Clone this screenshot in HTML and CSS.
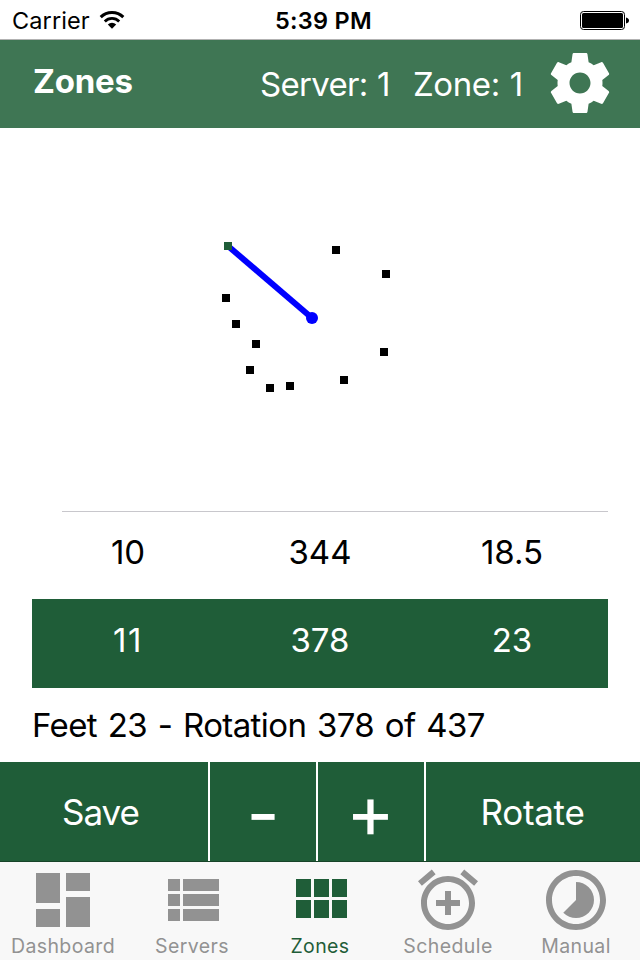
FILE: index.html
```html
<!DOCTYPE html>
<html lang="en">
    <head>
        <meta charset="utf-8">
        <title>Zones</title>
        <link rel="stylesheet" href="styles.css">
    </head>
    <body>
        <div class="status">
            <span class="carrier">Carrier</span>
            <svg class="wifi" width="26" height="20" viewBox="0 0 26 20">
                <path d="M1.7 7.1a16 16 0 0 1 22.6 0" fill="none" stroke="#000" stroke-width="3"/>
                <path d="M5.8 11.4a10.2 10.2 0 0 1 14.4 0" fill="none" stroke="#000" stroke-width="2.8"/>
                <path d="M8.8 14.4a6 6 0 0 1 8.4 0L13 18.7z"/>
            </svg>
            <span class="time">5:39 PM</span>
            <svg class="battery" width="50" height="20" viewBox="0 0 50 20">
                <rect x="0.5" y="1.5" width="44" height="18" rx="3" fill="none" stroke="#000"/>
                <rect x="2" y="3" width="41" height="15" rx="1.5"/>
                <path d="M46 7.5c2 .5 3 1.500 3 3s-1 2.500-3 3z"/>
            </svg>
        </div>
        <header class="header">
            <h1 class="title">Zones</h1>
            <span class="server">Server: 1</span>
            <span class="zone">Zone: 1</span>
            <svg class="icon" viewBox="0 0 24 24">
                <path d="M19.43 12.98c.04-.32.07-.64.07-.98s-.03-.66-.07-.98l2.110-1.650c.19-.15.24-.42.12-.64l-2-3.460c-.12-.22-.39-.3-.61-.22l-2.490 1c-.52-.4-1.080-.73-1.690-.98l-.38-2.650C14.460 2.180 14.250 2 14 2h-4c-.25 0-.46.18-.49.42l-.38 2.650c-.61.25-1.170.59-1.690.98l-2.490-1c-.23-.09-.49 0-.61.22l-2 3.460c-.13.22-.07.49.12.64l2.110 1.650c-.04.32-.07.65-.07.98s.03.66.07.98l-2.110 1.650c-.19.15-.24.42-.12.64l2 3.460c.12.22.39.3.61.22l2.490-1c.52.4 1.080.73 1.690.98l.38 2.650c.03.24.24.42.49.42h4c.25 0 .46-.18.49-.42l.38-2.650c.61-.25 1.170-.59 1.690-.98l2.490 1c.23.09.49 0 .61-.22l2-3.460c.12-.22.07-.49-.12-.64l-2.110-1.650zM12 15.500c-1.930 0-3.500-1.570-3.500-3.500s1.570-3.500 3.500-3.500 3.500 1.570 3.500 3.500-1.570 3.500-3.500 3.500z"/>
            </svg>
        </header>
        <main class="content">
            <svg class="plot" width="640" height="383" viewBox="0 128 640 383">
                <line x1="228" y1="246" x2="312" y2="318" stroke="#00f" stroke-width="6"/>
                <circle cx="312" cy="318" r="6" fill="#00f"/>
                <path d="M332 246h8v8h-8zM382 270h8v8h-8zM222 294h8v8h-8zM232 320h8v8h-8zM252 340h8v8h-8zM246 366h8v8h-8zM266 384h8v8h-8zM286 382h8v8h-8zM340 376h8v8h-8zM380 348h8v8h-8z"/>
                <rect class="current" x="224" y="242" width="8" height="8"/>
            </svg>
            <div class="points">
                <div class="row">
                    <span>10</span>
                    <span>344</span>
                    <span>18.5</span>
                </div>
                <div class="row selected">
                    <span class="number">11</span>
                    <span>378</span>
                    <span>23</span>
                </div>
            </div>
            <p class="info">Feet 23 - Rotation 378 of 437</p>
            <div class="buttons">
                <button type="button" class="save">Save</button>
                <button type="button" class="minus">-</button>
                <button type="button" class="plus">+</button>
                <button type="button" class="rotate">Rotate</button>
            </div>
        </main>
        <nav class="tabs">
            <a class="tab first">
                <svg class="icon" viewBox="0 0 24 24"><path d="M3 13h8V3H3v10zm0 8h8v-6H3v6zm10 0h8V11h-8v10zm0-18v6h8V3h-8z"/></svg>
                <span>Dashboard</span>
            </a>
            <a class="tab">
                <svg class="icon" viewBox="0 0 24 24"><path d="M4 14h4v-4H4v4zm0 5h4v-4H4v4zM4 9h4V5H4v4zm5 5h12v-4H9v4zm0 5h12v-4H9v4zM9 5v4h12V5H9z"/></svg>
                <span>Servers</span>
            </a>
            <a class="tab active">
                <svg class="icon" viewBox="0 0 24 24"><path d="M4 11h5V5H4v6zm0 7h5v-6H4v6zm6 0h5v-6h-5v6zm6 0h5v-6h-5v6zm-6-7h5V5h-5v6zm6-6v6h5V5h-5z"/></svg>
                <span>Zones</span>
            </a>
            <a class="tab">
                <svg class="icon" viewBox="0 0 24 24"><path d="M7.880 3.390L6.600 1.860 2 5.710l1.290 1.530 4.590-3.850zM22 5.720l-4.600-3.860-1.290 1.530 4.600 3.860L22 5.720zM12 4c-4.970 0-9 4.030-9 9s4.020 9 9 9c4.970 0 9-4.030 9-9s-4.030-9-9-9zm0 16c-3.870 0-7-3.130-7-7s3.130-7 7-7 7 3.130 7 7-3.130 7-7 7zm1-11h-2v3H8v2h3v3h2v-3h3v-2h-3V9z"/></svg>
                <span>Schedule</span>
            </a>
            <a class="tab">
                <svg class="icon" viewBox="0 0 24 24"><path d="M16.240 7.760C15.070 6.590 13.540 6 12 6v6l-4.240 4.240c2.340 2.340 6.140 2.340 8.490 0 2.340-2.340 2.340-6.140-.01-8.480zM12 2C6.480 2 2 6.480 2 12s4.480 10 10 10 10-4.480 10-10S17.520 2 12 2zm0 18c-4.420 0-8-3.580-8-8s3.580-8 8-8 8 3.580 8 8-3.580 8-8 8z"/></svg>
                <span>Manual</span>
            </a>
        </nav>
    </body>
</html>
```
FILE: styles.css
```css
* {
    box-sizing: border-box;
}
body {
    margin: 0;
    width: 640px;
    height: 960px;
    overflow: hidden;
    background: #fff;
    color: #000;
    font-family: Inter, "Liberation Sans", sans-serif;
    font-size: 33px;
    white-space: nowrap;
}
svg {
    display: block;
}
.icon {
    width: 72px;
    height: 72px;
    fill: currentColor;
}

.status {
    display: grid;
    grid-template-columns: 87px 113px 223px 1fr;
    height: 40px;
    padding: 1px 0 0 12px;
    border-bottom: 1px solid #b2b2b2;
    font-size: 23.5px;
    line-height: 39px;
}
.carrier {
    letter-spacing: 0.1px;
}
.wifi {
    margin-top: 9px;
}
.time {
    text-align: center;
    font-weight: 600;
    letter-spacing: 0.3px;
}
.battery {
    margin: 9px 0 0 145px;
}

.header {
    display: flex;
    height: 88px;
    padding: 0 24px 0 32px;
    background: #3f7654;
    color: #fff;
}
.title {
    width: 228px;
    margin: 0;
    padding-left: 1px;
    font-size: 33px;
    font-weight: 700;
    line-height: 83px;
    letter-spacing: -0.2px;
}
.server, .zone {
    line-height: 89px;
    letter-spacing: -0.7px;
    word-spacing: 1px;
}
.server {
    width: 153px;
}
.zone {
    width: 131px;
    letter-spacing: -0.4px;
}
.header .icon {
    margin-top: 7px;
    flex: none;
}

.current {
    fill: #1f5d38;
}
.points {
    margin: 0 32px;
}
.row {
    display: grid;
    grid-template-columns: repeat(3, 1fr);
    height: 88px;
    line-height: 83px;
    text-align: center;
    background: linear-gradient(#c8c7cc, #c8c7cc) 30px 0 / 546px 1px no-repeat;
}
.selected {
    height: 89px;
    background: #1f5d38;
    color: #fff;
}
.number {
    font-kerning: none;
    letter-spacing: 1.5px;
}
.info {
    height: 74px;
    margin: 0 32px;
    line-height: 75px;
    letter-spacing: -0.6px;
    word-spacing: 2px;
}
.buttons {
    display: grid;
    grid-template-columns: 208px 106px 106px 1fr;
    gap: 2px;
    height: 100px;
    border-bottom: 1px solid #174429;
}
.buttons button {
    height: 99px;
    padding: 0;
    border: 0;
    overflow: hidden;
    background: #1f5d38;
    color: #fff;
    font: 35px/101px Inter, "Liberation Sans", sans-serif;
}
.buttons .save {
    padding-right: 7px;
    letter-spacing: -1px;
}
.buttons .rotate {
    padding-right: 1px;
    letter-spacing: -0.3px;
}
.buttons .minus {
    padding-top: 3px;
    font-size: 72px;
    line-height: 96px;
}
.buttons .plus {
    padding-right: 1px;
    font-size: 74px;
    line-height: 99px;
}

.tabs {
    display: grid;
    grid-template-columns: repeat(5, 128px);
    height: 98px;
    background: #f8f8f8;
}
.tab {
    display: flex;
    flex-direction: column;
    align-items: center;
    padding-top: 2px;
    color: #929292;
    font-size: 19.5px;
    line-height: 21px;
    letter-spacing: 0.4px;
}
.first {
    padding-right: 2px;
}
.active {
    color: #1f5d38;
}
```
